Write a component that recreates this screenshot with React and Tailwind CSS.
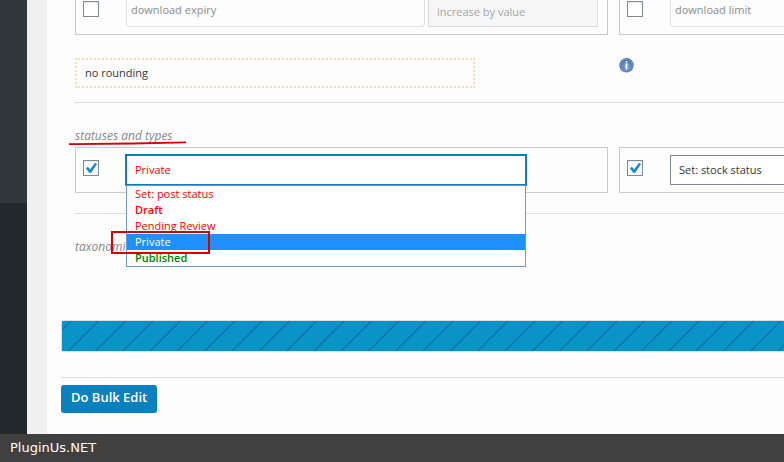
import { useState } from 'react';

const statuses = [
  { label: 'Set: post status', className: 'text-[#ff0000]' },
  { label: 'Draft', className: 'text-[#ff0000] font-semibold' },
  { label: 'Pending Review', className: 'text-[#ff0000]' },
  { label: 'Private', className: 'text-[#ff0000]' },
  { label: 'Published', className: 'text-[#008000] font-semibold' },
];

const stripes = Array.from({ length: 100 }, (_, i) => i * 27.3 - 21);

const CheckBox = ({ label, defaultChecked }) => (
  <span className="relative w-4 h-4 shrink-0">
    <input
      type="checkbox"
      aria-label={label}
      defaultChecked={defaultChecked}
      className="peer block appearance-none w-4 h-4 border border-[#7e8993] bg-white shadow-[inset_0_1px_2px_rgba(0,0,0,0.1)]"
    />
    <svg viewBox="0 0 16 16" className="absolute inset-0 w-4 h-4 pointer-events-none invisible peer-checked:visible">
      <path d="M12 2.7l2 1.2L8.4 12.7H6.2L2.9 8.4 4.9 6.8 7.2 9.2z" fill="#1e8cbe" />
    </svg>
  </span>
);

const InfoIcon = () => (
  <svg viewBox="0 0 16 16" className="w-4 h-4" role="img" aria-label="Info">
    <defs>
      <radialGradient id="info" cx="50%" cy="60%" r="55%">
        <stop offset="0" stopColor="#8fb0dc" />
        <stop offset="1" stopColor="#4470ae" />
      </radialGradient>
    </defs>
    <circle cx="7.5" cy="7.7" r="7.3" fill="#c9cdd4" />
    <circle cx="7.5" cy="7.2" r="7.1" fill="#4f78b2" />
    <circle cx="7.5" cy="7.2" r="5.8" fill="url(#info)" stroke="#86a4cf" strokeWidth="0.8" />
    <rect x="6.7" y="3" width="1.6" height="1.6" fill="#fff" />
    <rect x="6.7" y="5.4" width="1.6" height="6" fill="#fff" />
  </svg>
);

const StatusSelect = () => {
  const [value, setValue] = useState('Private');

  return (
    <div className="relative w-[402px] shrink-0">
      <select
        aria-label="Post status"
        value={value}
        onChange={(e) => setValue(e.target.value)}
        className="block appearance-none w-full h-8 px-2 border-2 border-[#0a7fbc] bg-white text-[#ff0000] outline-none"
      >
        {statuses.map((s) => (
          <option key={s.label}>{s.label}</option>
        ))}
      </select>
      {/* Opened list */}
      <ul role="listbox" aria-label="Post status options" className="absolute top-[31px] inset-x-px z-10 border border-[#7096d2] bg-white leading-4">
        {statuses.map((s) => (
          <li key={s.label} role="option" aria-selected={s.label === value} onClick={() => setValue(s.label)}>
            <span className={s.label === value ? 'block h-4 px-2 bg-[#1e90ff] text-white' : `block h-4 px-2 ${s.className}`}>
              {s.label}
            </span>
          </li>
        ))}
      </ul>
      {/* Red frame round the chosen option */}
      <div className="absolute top-[77px] -left-3.5 z-20 w-[99px] h-[23px] border-2 border-[#d40000] pointer-events-none" />
    </div>
  );
};

const App = () => {
  return (
    <div className="min-h-screen flex flex-col overflow-hidden bg-[#fdfdfd] font-['Open_Sans',sans-serif] text-[11px] text-[#32373c]">
      <div className="flex flex-1">
        {/* Admin menu */}
        <aside className="w-[27px] shrink-0 bg-[#23282d]">
          <div className="h-[203px] bg-[#32373c]" />
        </aside>
        <div className="w-5 shrink-0 bg-[#f0f0f0]" />

        <main className="flex-1 min-w-0 pl-3.5 pb-5">
          <div className="pl-3.5">
            {/* Downloads */}
            <div className="flex gap-[11px] h-[35px]">
              <div className="w-[533px] shrink-0 flex border border-t-0 border-[#c8cacb] pl-[7px]">
                <div className="w-[43px] shrink-0 pt-px">
                  <CheckBox label="download expiry" />
                </div>
                <input type="text" aria-label="download expiry" placeholder="download expiry" className="w-[299px] h-[27px] px-1 pb-2 border border-t-0 border-[#dfe0e1] rounded-b placeholder:text-[#8c8c8c]" />
                <input type="text" aria-label="increase by value" placeholder="increase by value" disabled className="ml-[3px] w-[170px] h-[27px] px-2 pb-1 border border-t-0 border-[#dcdcdc] bg-[#f6f6f6] placeholder:text-[#a4a6a8]" />
              </div>
              <div className="flex-1 min-w-0 flex border border-t-0 border-r-0 border-[#c8cacb] pl-[7px] overflow-hidden">
                <div className="w-[43px] shrink-0 pt-px">
                  <CheckBox label="download limit" />
                </div>
                <input type="text" aria-label="download limit" placeholder="download limit" className="w-[299px] shrink-0 h-[27px] px-1 pb-2 border border-t-0 border-[#dfe0e1] rounded-b placeholder:text-[#8c8c8c]" />
              </div>
            </div>

            <div className="flex gap-36 mt-[23px]">
              <select aria-label="Rounding" className="appearance-none w-[400px] h-[30px] px-2 border-2 border-dotted border-[#f5deb3]">
                <option>no rounding</option>
              </select>
              <InfoIcon />
            </div>

            <hr className="mt-3.5 border-[#dcdddd]" />

            {/* Statuses and types */}
            <h5 className="relative mt-[25px] h-[19px] text-xs leading-4 italic text-[#888]">
              statuses and types
              <svg viewBox="0 0 118 5" className="absolute top-[13px] -left-1.5 w-[118px] h-[5px]">
                <path d="M0 2.2L64 1.6 117 0.6V2.2L64 3.6 0 4z" fill="#d40000" />
              </svg>
            </h5>
            <div className="flex gap-[11px] h-[46px]">
              <div className="w-[533px] shrink-0 flex border border-[#c8cacb] pl-[7px] pt-1.5">
                <div className="w-[42px] shrink-0 pt-1.5">
                  <CheckBox label="Post status" defaultChecked />
                </div>
                <StatusSelect />
              </div>
              <div className="flex-1 min-w-0 flex border border-r-0 border-[#c8cacb] pl-[7px] pt-[7px] overflow-hidden">
                <div className="w-[43px] shrink-0 pt-[5px]">
                  <CheckBox label="Stock status" defaultChecked />
                </div>
                <select aria-label="Stock status" className="appearance-none w-[400px] shrink-0 h-[30px] px-2 border border-[#7e8993] bg-white">
                  <option>Set: stock status</option>
                </select>
              </div>
            </div>

            <hr className="mt-5 border-[#dcdddd]" />

            <h5 className="mt-[25px] text-xs leading-4 italic text-[#888]">taxonomies</h5>
          </div>

          {/* Progress */}
          <div className="mt-[65px] h-8 border border-r-0 border-[#dcdddd] rounded-l-xs bg-[#0a93c7] overflow-hidden">
            <svg className="block w-full h-[30px]" aria-hidden="true">
              {stripes.map((x) => (
                <line key={x} x1={x} y1="30" x2={x + 30} y2="0" stroke="#0b70a5" strokeWidth="1.1" />
              ))}
            </svg>
          </div>

          <hr className="mt-[25px] border-[#dcdddd]" />

          <button className="mt-[7px] h-7 px-2.5 pb-0.5 rounded-[3px] bg-[#0a80bc] text-[13px] font-semibold text-white">
            Do Bulk Edit
          </button>
        </main>
      </div>

      <footer className="h-7 px-2.5 bg-[#404040] font-['DejaVu_Sans',sans-serif] text-[13px] leading-7 text-white">
        PluginUs.NET
      </footer>
    </div>
  );
};

export default App;
